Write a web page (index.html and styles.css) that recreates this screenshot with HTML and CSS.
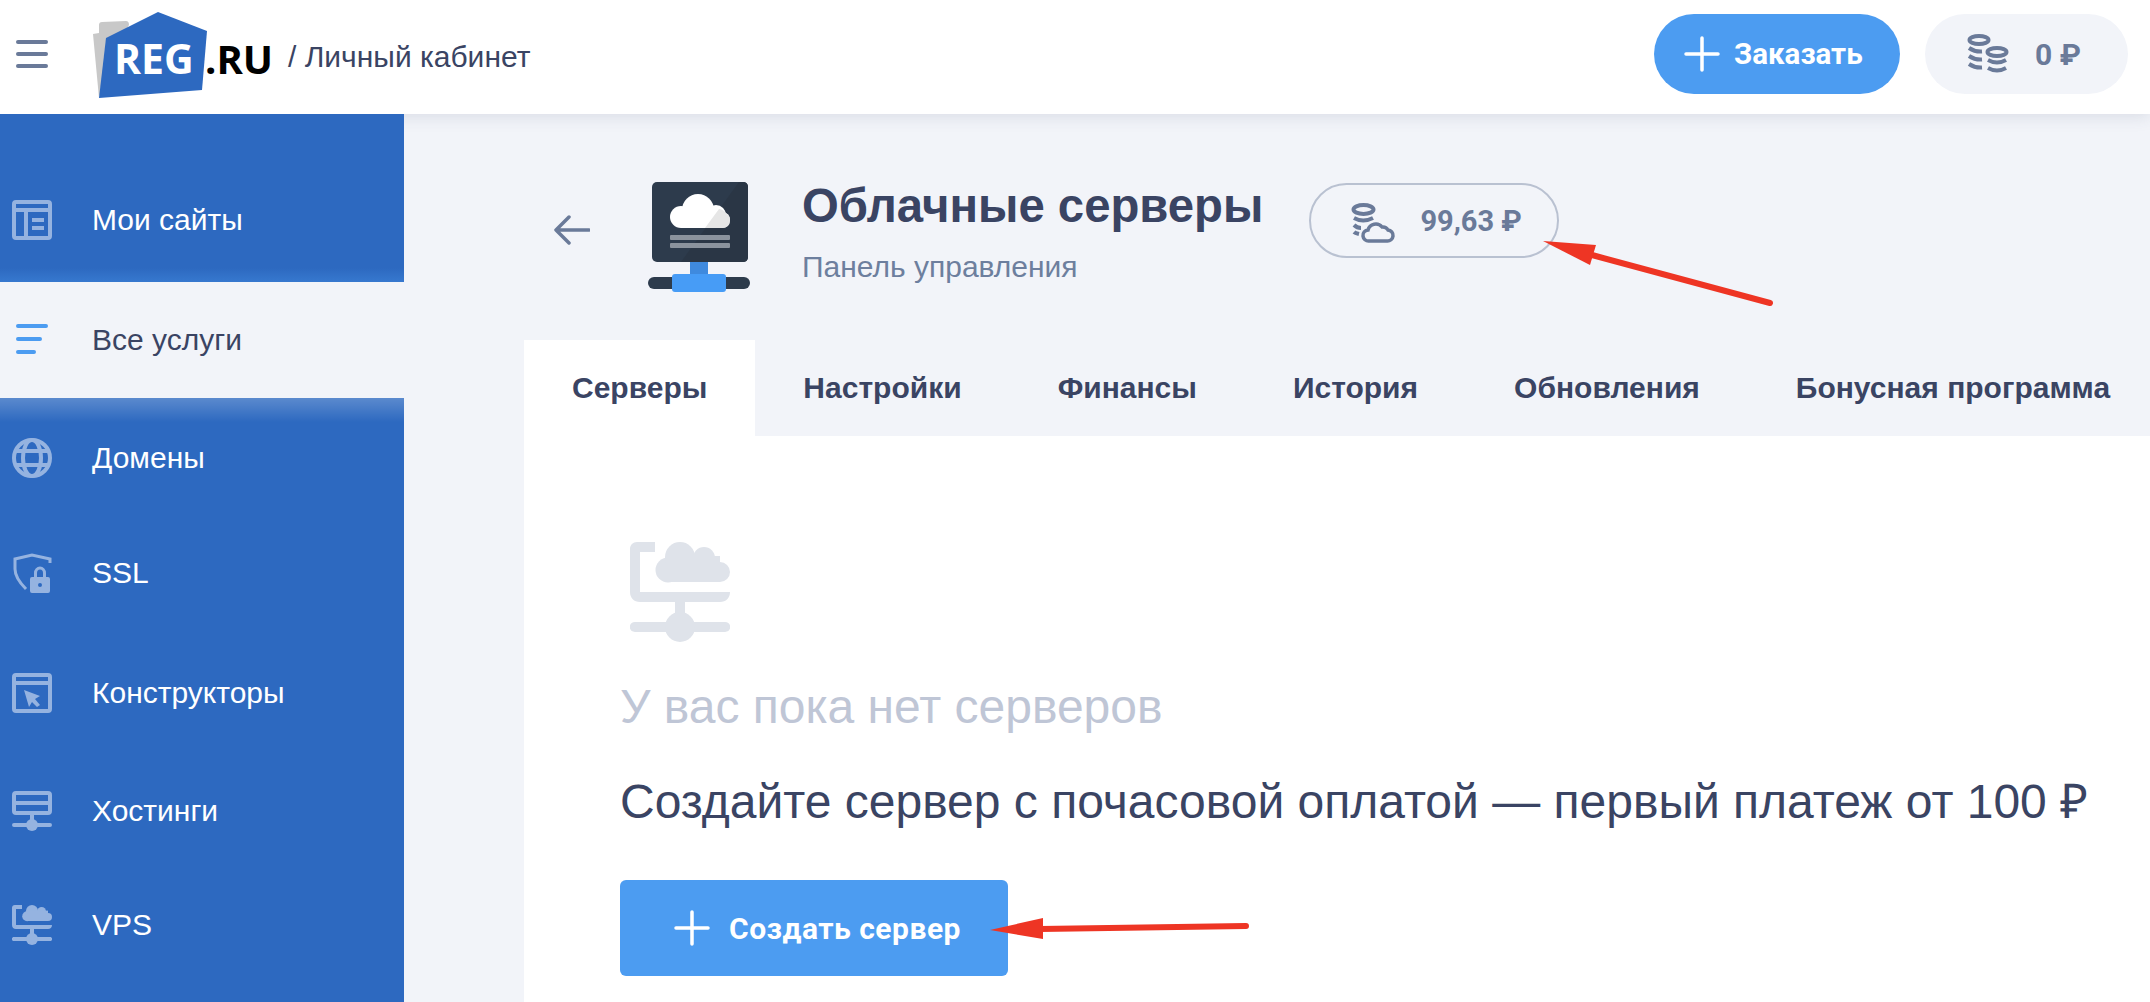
FILE: index.html
```html
<!DOCTYPE html>
<html lang="ru">
<head>
    <meta charset="UTF-8">
    <title>Облачные серверы</title>
    <link rel="stylesheet" href="styles.css">
</head>
<body>
    <svg class="defs" width="0" height="0">
        <symbol id="cloud-net" viewBox="0 0 100 100">
            <path d="M7 0H25V10H10V50H100C100 56 96 60 90 60H55V80H95C102 80 102 90 95 90H5C-2 90 -2 80 5 80H45V60H10C4 60 0 56 0 50V7C0 3 3 0 7 0Z"/>
            <circle cx="50" cy="85" r="15"/>
            <circle cx="38" cy="28" r="12.500"/>
            <circle cx="50" cy="15" r="15"/>
            <circle cx="74" cy="16" r="11"/>
            <circle cx="90" cy="30" r="10"/>
            <rect x="36" y="14" width="54" height="26"/>
        </symbol>
    </svg>

    <header class="topbar">
        <div class="burger"><span></span><span></span><span></span></div>
        <svg class="logo" width="180" height="86" viewBox="93 12 180 86">
            <path fill="#c8c8c8" d="M93 34L99 33V25Q99 22 102 22L126 21Q129 21 129 25L110 60L99 98Z"/>
            <path fill="#2d69c0" d="M158 12L207 31L202 90L99 98L106 38Z"/>
            <text class="logo-reg" x="114" y="74">REG</text>
            <text class="logo-ru" x="205" y="74">.RU</text>
        </svg>
        <div class="cabinet">/ Личный кабинет</div>
        <div class="topbar-right">
            <button class="order-btn">
                <svg width="36" height="36" viewBox="0 0 36 36"><path d="M18 2V34M2 18H34" stroke="#fff" stroke-width="3.500" stroke-linecap="round"/></svg>
                Заказать
            </button>
            <div class="balance">
                <svg width="44" height="44" viewBox="0 0 44 44" fill="none" stroke="#6a7a99" stroke-width="4">
                    <ellipse cx="13" cy="8" rx="9.500" ry="4"/>
                    <path d="M3 16Q9 20 16 19.500M3 24Q9 28 16 27.500M3 32Q9 36 16 35.500"/>
                    <ellipse cx="31" cy="20" rx="9.500" ry="4"/>
                    <path d="M22 28Q31 33 40 28M22 36Q31 41 40 36"/>
                </svg>
                <span>0 ₽</span>
            </div>
        </div>
    </header>

    <div class="layout">
        <nav class="sidebar">
            <a class="nav-item nudge">
                <svg class="nav-icon" viewBox="0 0 40 40" fill="none" stroke="#95b3e0" stroke-width="4">
                    <rect x="2" y="2" width="36" height="36" rx="2"/>
                    <path d="M2 10H38M14 10V38M20 20H32M20 28H32"/>
                </svg>
                Мои сайты
            </a>
            <a class="nav-item active">
                <svg class="nav-icon" viewBox="0 0 40 40" fill="none" stroke="#4c9cf1" stroke-width="4" stroke-linecap="round">
                    <path d="M6 6H34M6 19H28M6 32H22"/>
                </svg>
                Все услуги
            </a>
            <a class="nav-item">
                <svg class="nav-icon" viewBox="0 0 40 40" fill="none" stroke="#95b3e0" stroke-width="4">
                    <circle cx="20" cy="20" r="18"/>
                    <ellipse cx="20" cy="20" rx="9" ry="18"/>
                    <path d="M4 13H36M4 27H36"/>
                </svg>
                Домены
            </a>
            <a class="nav-item nudge">
                <svg class="nav-icon" viewBox="0 0 40 40" fill="none" stroke="#95b3e0" stroke-width="3">
                    <path d="M38 10V6L20 2L3 6V16C3 24 8 30 14 36"/>
                    <path d="M23.500 25V20A4.500 5 0 0 1 32.500 20V25"/>
                    <path fill="#95b3e0" stroke="none" fill-rule="evenodd" d="M20 24H36Q38 24 38 26V38Q38 40 36 40H20Q18 40 18 38V26Q18 24 20 24ZM28 30A2 2 0 1 0 28 34A2 2 0 1 0 28 30Z"/>
                </svg>
                SSL
            </a>
            <a class="nav-item">
                <svg class="nav-icon" viewBox="0 0 40 40" fill="none" stroke="#95b3e0" stroke-width="4">
                    <rect x="2" y="2" width="36" height="36" rx="2"/>
                    <path d="M2 10H38"/>
                    <path fill="#95b3e0" stroke="none" d="M12 17L28 23L23 26L28 32L25 34L20 29L17 34Z"/>
                </svg>
                Конструкторы
            </a>
            <a class="nav-item">
                <svg class="nav-icon" viewBox="0 0 40 40" fill="none" stroke="#95b3e0" stroke-width="4">
                    <rect x="2" y="2" width="36" height="20" rx="2"/>
                    <path d="M2 12H38M20 22V32M2 34H38" stroke-linecap="round"/>
                    <circle cx="20" cy="34" r="6" fill="#95b3e0" stroke="none"/>
                </svg>
                Хостинги
            </a>
            <a class="nav-item nudge">
                <svg class="nav-icon nav-icon-fill" viewBox="0 0 40 40"><use href="#cloud-net"/></svg>
                VPS
            </a>
        </nav>

        <main class="content">
            <section class="page-head">
                <svg class="back" width="36" height="30" viewBox="0 0 36 30" fill="none" stroke="#6a7a99" stroke-width="3.500" stroke-linecap="round" stroke-linejoin="round">
                    <path d="M35 15H2M15 2L2 15L15 28"/>
                </svg>
                <svg class="server-pic" width="102" height="110" viewBox="0 0 102 110">
                    <rect x="4" y="0" width="96" height="80" rx="5" fill="#2d3b4c"/>
                    <path d="M91 0H95Q100 0 100 5V75Q100 80 95 80H33Z" fill="#2a3645"/>
                    <g fill="#fff">
                        <circle cx="33" cy="35" r="11"/>
                        <circle cx="50" cy="28" r="16"/>
                        <circle cx="68" cy="33" r="10"/>
                        <circle cx="74" cy="38" r="8"/>
                        <rect x="33" y="30" width="41" height="16"/>
                    </g>
                    <path d="M57 46L71 27A10 10 0 0 1 78 31A8 8 0 0 1 82 38Q82 46 74 46Z" fill="#e6e6e6"/>
                    <rect x="22" y="53" width="60" height="5" rx="1" fill="#8b939d"/>
                    <rect x="22" y="61" width="60" height="5" rx="1" fill="#8b939d"/>
                    <rect x="42" y="80" width="18" height="14" fill="#3f8ade"/>
                    <rect x="0" y="95" width="102" height="12" rx="6" fill="#2d3b4c"/>
                    <rect x="24" y="92" width="54" height="18" rx="3" fill="#479cf6"/>
                </svg>
                <div class="head-text">
                    <h1>Облачные серверы</h1>
                    <div class="subtitle">Панель управления</div>
                </div>
                <div class="cloud-balance">
                    <svg width="50" height="48" viewBox="0 0 50 48" fill="none" stroke="#6a7a99" stroke-width="4">
                        <ellipse cx="17.500" cy="12.500" rx="10" ry="4.500"/>
                        <path d="M8 21Q17 26 27 21M8 28Q11 31 15 31M8 35Q9 36 13 37"/>
                        <path stroke-width="3.500" d="M23 44A5.500 5.500 0 0 1 22 33A8 8 0 0 1 36 30A6 6 0 0 1 42 33A5.500 5.500 0 0 1 41 44Z"/>
                    </svg>
                    <span>99,63 ₽</span>
                </div>
            </section>

            <div class="tabs">
                <a class="tab current">Серверы</a>
                <a class="tab">Настройки</a>
                <a class="tab">Финансы</a>
                <a class="tab">История</a>
                <a class="tab">Обновления</a>
                <a class="tab">Бонусная программа</a>
            </div>

            <section class="panel">
                <svg class="empty-icon" width="100" height="100" viewBox="0 0 100 100"><use href="#cloud-net"/></svg>
                <div class="empty-title">У вас пока нет серверов</div>
                <div class="empty-text">Создайте сервер с почасовой оплатой — первый платеж от 100 ₽</div>
                <button class="create-btn">
                    <svg width="36" height="36" viewBox="0 0 36 36"><path d="M18 2V34M2 18H34" stroke="#fff" stroke-width="3.500" stroke-linecap="round"/></svg>
                    Создать сервер
                </button>
            </section>
        </main>
    </div>

    <svg class="marks" width="2150" height="1002" viewBox="0 0 2150 1002">
        <path d="M1770 303L1592 255" stroke="#ee3524" stroke-width="6" stroke-linecap="round"/>
        <path d="M1543 241L1596 245L1590 265Z" fill="#ee3524"/>
        <path d="M1246 926L1040 929" stroke="#ee3524" stroke-width="6" stroke-linecap="round"/>
        <path d="M990 930L1043 918V939Z" fill="#ee3524"/>
    </svg>
</body>
</html>
```

FILE: styles.css
```css
* {
    box-sizing: border-box;
}
html, body {
    margin: 0;
    height: 1002px;
    overflow: hidden;
}
body {
    position: relative;
    font-family: "Liberation Sans", Arial, sans-serif;
    color: #3a4463;
    background: #f2f4f9;
}
.defs {
    position: absolute;
}
.topbar {
    position: relative;
    z-index: 1;
    display: flex;
    align-items: center;
    height: 114px;
    padding-left: 16px;
    background: white;
    box-shadow: 0 2px 16px rgba(60, 70, 100, 0.14);
}
.burger {
    display: flex;
    flex-direction: column;
    gap: 8px;
    width: 32px;
    margin-right: 45px;
    margin-bottom: 6px;
}
.burger span {
    height: 4px;
    border-radius: 2px;
    background: #6a7a99;
}
.logo {
    margin-bottom: 4px;
}
.logo-reg {
    font-family: "Open Sans", sans-serif;
    font-weight: 700;
    font-size: 41px;
    fill: white;
}
.logo-ru {
    font-family: "Open Sans", sans-serif;
    font-weight: 700;
    font-size: 40px;
    fill: black;
}
.cabinet {
    margin-left: 15px;
    font-size: 30px;
}
.topbar-right {
    display: flex;
    gap: 25px;
    margin-left: auto;
    margin-right: 22px;
    margin-bottom: 6px;
}
.order-btn {
    display: flex;
    align-items: center;
    gap: 14px;
    width: 246px;
    height: 80px;
    padding: 0 0 0 30px;
    border: none;
    border-radius: 40px;
    background: #4c9cf1;
    color: white;
    font-family: Roboto, sans-serif;
    font-weight: 700;
    font-size: 29.500px;
}
.balance {
    display: flex;
    align-items: center;
    gap: 25px;
    width: 203px;
    height: 80px;
    padding-left: 41px;
    border-radius: 40px;
    background: #f2f4f9;
    color: #6a7a99;
    font-family: Roboto, sans-serif;
    font-weight: 700;
    font-size: 30px;
}
.layout {
    display: flex;
    height: 888px;
}
.sidebar {
    position: relative;
    z-index: 2;
    flex: none;
    width: 404px;
    padding-top: 50.500px;
    background: #2d69c0;
    overflow: hidden;
}
.nav-item {
    position: relative;
    display: flex;
    align-items: center;
    gap: 40px;
    height: 117.500px;
    padding-left: 12px;
    color: white;
    font-size: 30px;
}
.nudge {
    padding-bottom: 6px;
}
.nav-icon {
    flex: none;
    width: 40px;
    height: 40px;
}
.nav-icon-fill {
    fill: #95b3e0;
}
.nav-item.active {
    height: 116px;
    margin-bottom: 1.500px;
    background: #f2f4f9;
    color: #3a4463;
}
.nav-item.active::before {
    content: "";
    position: absolute;
    left: 0;
    right: 0;
    bottom: 100%;
    height: 14px;
    background: linear-gradient(to top, rgba(76, 156, 241, 0.3), rgba(76, 156, 241, 0));
}
.nav-item.active::after {
    content: "";
    position: absolute;
    left: 0;
    right: 0;
    top: 100%;
    height: 24px;
    background: linear-gradient(to bottom, rgba(255, 255, 255, 0.22), rgba(255, 255, 255, 0));
}
.content {
    flex: 1;
    min-width: 0;
    display: flex;
    flex-direction: column;
}
.page-head {
    display: flex;
    align-items: flex-start;
    flex: none;
    height: 226px;
    padding: 68px 0 0 150px;
}
.back {
    margin-top: 33px;
    margin-right: 58px;
}
.server-pic {
    margin-right: 52px;
}
.page-head h1 {
    margin: 0;
    font-size: 47.300px;
    line-height: 48px;
    white-space: nowrap;
}
.subtitle {
    margin-top: 21px;
    font-size: 30px;
    line-height: 32px;
    color: #6d7f9e;
}
.cloud-balance {
    display: flex;
    align-items: center;
    gap: 24px;
    width: 250px;
    height: 75px;
    margin-left: 46px;
    margin-top: 1px;
    padding-left: 35px;
    border: 2px solid #b9c1d1;
    border-radius: 38px;
    color: #6a7a99;
    font-family: Roboto, sans-serif;
    font-weight: 700;
    font-size: 29px;
    white-space: nowrap;
}
.tabs {
    display: flex;
    flex: none;
    height: 96px;
    margin-left: 120px;
}
.tab {
    display: flex;
    align-items: center;
    flex: none;
    padding: 0 48px;
    font-weight: 700;
    font-size: 30px;
    white-space: nowrap;
}
.tab.current {
    background: white;
}
.panel {
    flex: 1;
    margin-left: 120px;
    padding: 106px 0 0 96px;
    background: white;
}
.empty-icon {
    display: block;
    margin-left: 10px;
    fill: #dfe3ea;
}
.empty-title {
    margin-top: 35px;
    font-size: 48px;
    line-height: 60px;
    color: #bfc6d6;
}
.empty-text {
    margin-top: 35px;
    font-size: 48px;
    line-height: 60px;
    white-space: nowrap;
}
.create-btn {
    display: flex;
    align-items: center;
    gap: 19px;
    width: 388px;
    height: 96px;
    margin-top: 48px;
    padding: 0 0 0 54px;
    border: none;
    border-radius: 6px;
    background: #4c9cf1;
    color: white;
    font-family: Roboto, sans-serif;
    font-weight: 700;
    font-size: 30px;
    letter-spacing: 0.500px;
}
.marks {
    position: absolute;
    top: 0;
    left: 0;
    z-index: 3;
    pointer-events: none;
}
```
